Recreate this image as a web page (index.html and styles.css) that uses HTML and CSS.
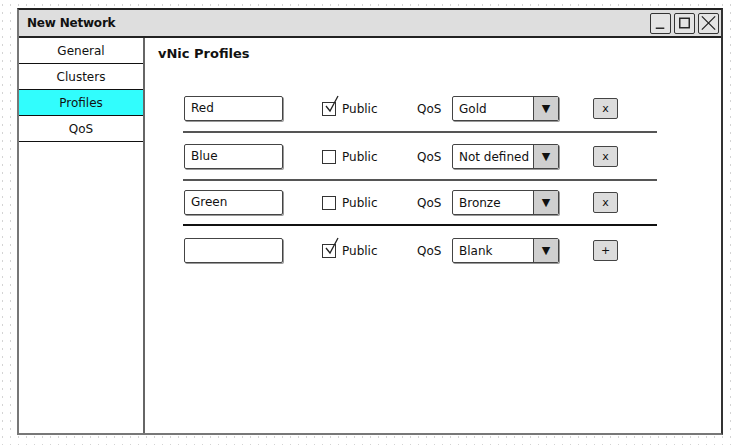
FILE: index.html
```html
<!DOCTYPE html>
<html>
<head>
<meta charset="utf-8">
<link rel="stylesheet" href="styles.css">
</head>
<body>
<div class="window">
  <div class="titlebar">
    <span class="title">New Network</span>
    <div class="winbtns">
      <div class="wbtn"><svg width="20" height="20" viewBox="0 0 20 20"><path d="M5 15.5h9" stroke="#222" stroke-width="1.5"/></svg></div>
      <div class="wbtn"><svg width="20" height="20" viewBox="0 0 20 20"><rect x="5" y="5" width="10" height="10" fill="none" stroke="#222" stroke-width="1.5"/></svg></div>
      <div class="wbtn"><svg width="20" height="20" viewBox="0 0 20 20"><path d="M3 3L17 17M17 3L3 17" stroke="#222" stroke-width="1.3"/></svg></div>
    </div>
  </div>
  <div class="body">
    <nav class="sidebar">
      <div class="navitem">General</div>
      <div class="navitem">Clusters</div>
      <div class="navitem active">Profiles</div>
      <div class="navitem">QoS</div>
    </nav>
    <main class="content">
      <h1 class="heading">vNic Profiles</h1>
      <div class="rows">
        <div class="row r1">
          <div class="input">Red</div>
          <div class="check"><span class="box"><svg class="tick" width="18" height="20" viewBox="0 0 18 20"><path d="M3 11L7 16L15 1" fill="none" stroke="#222" stroke-width="1.3"/></svg></span>Public</div>
          <div class="qos">QoS</div>
          <div class="select"><span class="val">Gold</span><span class="arrow">▼</span></div>
          <div class="btn">x</div>
        </div>
        <div class="row r2">
          <div class="input">Blue</div>
          <div class="check"><span class="box"></span>Public</div>
          <div class="qos">QoS</div>
          <div class="select"><span class="val">Not defined</span><span class="arrow">▼</span></div>
          <div class="btn">x</div>
        </div>
        <div class="row r3">
          <div class="input">Green</div>
          <div class="check"><span class="box"></span>Public</div>
          <div class="qos">QoS</div>
          <div class="select"><span class="val">Bronze</span><span class="arrow">▼</span></div>
          <div class="btn">x</div>
        </div>
        <div class="row r4">
          <div class="input"></div>
          <div class="check"><span class="box"><svg class="tick" width="18" height="20" viewBox="0 0 18 20"><path d="M3 11L7 16L15 1" fill="none" stroke="#222" stroke-width="1.3"/></svg></span>Public</div>
          <div class="qos">QoS</div>
          <div class="select"><span class="val">Blank</span><span class="arrow">▼</span></div>
          <div class="btn">+</div>
        </div>
      </div>
    </main>
  </div>
</div>
</body>
</html>
```
FILE: styles.css
```css
* { box-sizing: border-box; }
html, body { margin: 0; padding: 0; }
body {
  width: 733px;
  height: 445px;
  overflow: hidden;
  font-family: "DejaVu Sans", "Open Sans", sans-serif;
  font-size: 12px;
  color: #111;
  background-color: #fff;
  background-image:
    linear-gradient(to bottom, transparent 0 2px, #fff 2px 8px),
    linear-gradient(to right, #d4d4d4 0 1px, transparent 1px 8px);
  background-size: 8px 8px;
  background-position: 2px 4px;
  padding: 8px 0 0 17px;
}
.window {
  width: 706px;
  height: 427px;
  border: 2px solid #777;
  border-top-color: #222;
  border-right-color: #333;
  background: #fff;
  display: flex;
  flex-direction: column;
}
.titlebar {
  height: 28px;
  background: #dedede;
  border-bottom: 2px solid #222;
  display: flex;
  align-items: center;
  justify-content: space-between;
  padding: 0 2px 0 8px;
}
.title {
  font-weight: bold;
  font-size: 12px;
  letter-spacing: -0.2px;
}
.winbtns { display: flex; gap: 3px; }
.wbtn {
  width: 21px;
  height: 21px;
  border: 1px solid #333;
  border-radius: 2px;
  background: #e4e4e4;
  display: flex;
  align-items: center;
  justify-content: center;
}
.body { flex: 1; display: flex; }
.sidebar {
  width: 126px;
  border-right: 2px solid #666;
}
.navitem {
  height: 26px;
  border-bottom: 1px solid #111;
  display: flex;
  align-items: center;
  justify-content: center;
  font-size: 12px;
}
.navitem.active { background: #31fdfd; }
.content {
  flex: 1;
  padding: 0 0 0 38px;
}
.heading {
  margin: 6px 0 0 -25px;
  font-size: 13px;
  font-weight: bold;
  height: 20px;
  line-height: 20px;
}
.rows { margin-top: 32px; width: 474px; }
.row {
  display: flex;
  align-items: center;
  padding: 11px 0 10px 1px;
  border-bottom: 2px solid #555;
}
.row.r1 { padding-top: 0; }
.row.r3 { padding: 9px 0 9px 1px; border-bottom-color: #111; }
.row.r4 { border-bottom: none; padding-top: 12px; }
.input {
  width: 99px;
  height: 25px;
  border: 1px solid #444;
  border-radius: 2px;
  box-shadow: 1px 1px 0 #999;
  padding: 0 6px;
  line-height: 23px;
  font-size: 12px;
}
.check {
  margin-left: 39px;
  width: 95px;
  display: flex;
  align-items: center;
  font-size: 12px;
}
.box {
  position: relative;
  width: 14px;
  height: 14px;
  border: 1px solid #333;
  margin-right: 6px;
}
.tick { position: absolute; left: 0; top: -8px; }
.qos { width: 35px; font-size: 12px; }
.select {
  width: 107px;
  height: 25px;
  border: 1px solid #444;
  border-radius: 2px;
  box-shadow: 1px 1px 0 #999;
  display: flex;
}
.val { flex: 1; padding-left: 6px; line-height: 24px; white-space: nowrap; }
.arrow {
  width: 25px;
  background: #cfcfcf;
  border-left: 1px solid #444;
  display: flex;
  align-items: center;
  justify-content: center;
  font-size: 11px;
}
.btn {
  margin-left: 34px;
  width: 25px;
  height: 21px;
  border: 1px solid #444;
  border-radius: 2px;
  background: #dcdcdc;
  display: flex;
  align-items: center;
  justify-content: center;
  font-size: 11px;
}
```
